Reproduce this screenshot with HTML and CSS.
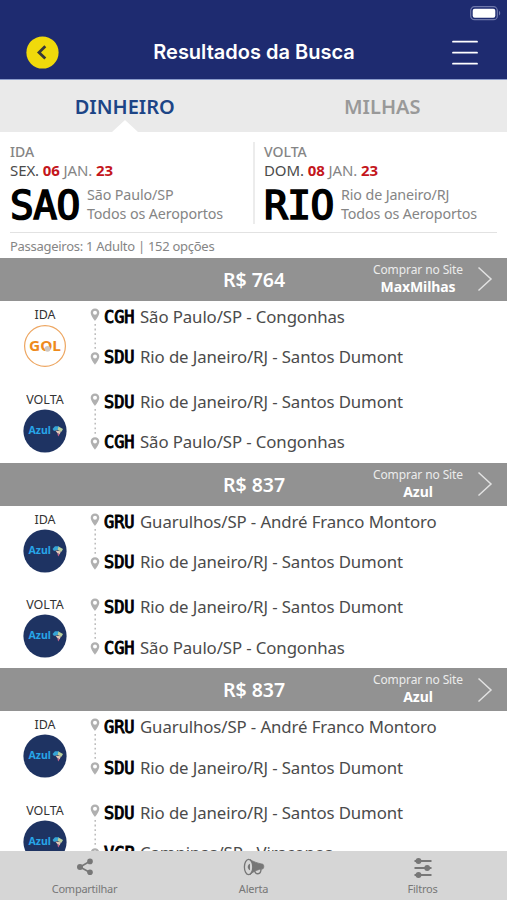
FILE: index.html
```html
<!DOCTYPE html>
<html lang="pt-BR">
<head>
    <meta charset="UTF-8">
    <meta name="viewport" content="width=device-width, initial-scale=1.0">
    <title>Resultados da Busca</title>
    <link rel="stylesheet" href="styles.css">
</head>
<body>
    <!-- shared icons -->
    <svg class="sprite" width="0" height="0">
        <symbol id="route" viewBox="0 0 10 58">
            <path id="pin" fill="#b0b0b0" fill-rule="evenodd" d="M5 0.5C2.4 0.5 0.7 2.4 0.7 4.8C0.7 7.8 5 13 5 13S9.3 7.8 9.3 4.8C9.3 2.4 7.6 0.5 5 0.5ZM5 2.8A2 2 0 1 1 5 6.8A2 2 0 1 1 5 2.8Z"/>
            <use href="#pin" y="43.7"/>
            <path d="M5.2 16V42" stroke="#b5b5b5" stroke-width="1.4" stroke-dasharray="1.8 2.8"/>
        </symbol>
        <symbol id="gol" viewBox="0 0 44 44">
            <circle cx="22" cy="22" r="20.4" fill="#fff" stroke="#eda661" stroke-width="1.2"/>
            <text class="gol-text" x="6" y="27.3" textLength="32" lengthAdjust="spacingAndGlyphs">GOL</text>
            <circle cx="24.5" cy="24.8" r="2.9" fill="#cfc8c2"/>
        </symbol>
        <symbol id="azul" viewBox="0 0 44 44">
            <circle cx="22" cy="22" r="21.6" fill="#1e3362"/>
            <text class="azul-text" x="5.5" y="25.3" textLength="22.5" lengthAdjust="spacingAndGlyphs">Azul</text>
            <path fill="#35a5d6" d="M29.5 20L32 17.3L36 17.3L35.5 20.5L31 22Z"/>
            <path fill="#b9cf9c" d="M35.5 17.6L40 20L38.5 22.8L34.5 21Z"/>
            <path fill="#e3c9b5" d="M32.3 21.5L38 22.3L36.7 25.2L34.5 24.2Z"/>
            <path fill="#c0618a" d="M34.3 24.2L36.7 25.2L35.2 27.4Z"/>
        </symbol>
        <symbol id="next" viewBox="0 0 16 26">
            <path d="M1.5 1.5L14 13L1.5 24.5" fill="none" stroke="#e2e2e2" stroke-width="1.5"/>
        </symbol>
    </svg>

    <div class="app">
        <header class="header">
            <svg class="battery" width="31" height="15" viewBox="0 0 31 15">
                <rect x="0.7" y="0.7" width="26.6" height="13" rx="3.8" fill="none" stroke="#6f78ab" stroke-width="1.2"/>
                <rect x="2.7" y="2.7" width="22.6" height="9" rx="2" fill="#fff"/>
                <path d="M29 5C30.6 5.6 30.6 8.8 29 9.4Z" fill="#6f78ab"/>
            </svg>
            <div class="nav">
                <svg class="back" width="33" height="33" viewBox="0 0 33 33">
                    <circle cx="16.5" cy="16.5" r="16.1" fill="#f0da0b"/>
                    <path d="M19.3 10.3L13 16.4L19.3 22.5" fill="none" stroke="#37383a" stroke-width="2.8"/>
                </svg>
                <h1 class="title">Resultados da Busca</h1>
                <svg class="menu" width="26" height="26" viewBox="0 0 26 26">
                    <path d="M1 1.7H25M1 12.7H25M1 23.7H25" stroke="#fff" stroke-width="1.8" stroke-linecap="round"/>
                </svg>
            </div>
        </header>

        <div class="tabs">
            <div class="tab active">DINHEIRO</div>
            <div class="tab">MILHAS</div>
        </div>

        <section class="summary">
            <div class="trips">
                <div class="trip">
                    <div class="way">IDA</div>
                    <div class="date"><span class="day">SEX.</span> <b>06</b> JAN. <b>23</b></div>
                    <div class="place">
                        <div class="iata">SAO</div>
                        <div class="city">São Paulo/SP<br>Todos os Aeroportos</div>
                    </div>
                </div>
                <div class="trip">
                    <div class="way">VOLTA</div>
                    <div class="date"><span class="day">DOM.</span> <b>08</b> JAN. <b>23</b></div>
                    <div class="place">
                        <div class="iata">RIO</div>
                        <div class="city">Rio de Janeiro/RJ<br>Todos os Aeroportos</div>
                    </div>
                </div>
            </div>
            <div class="passengers">Passageiros: 1 Adulto | 152 opções</div>
        </section>

        <main class="results">
            <article class="result">
                <div class="bar">
                    <div class="price">R$ 764</div>
                    <div class="buy"><span>Comprar no Site</span><b>MaxMilhas</b></div>
                    <svg class="next" width="16" height="26"><use href="#next"/></svg>
                </div>
                <div class="leg">
                    <div class="airline"><span>IDA</span><svg width="44" height="44"><use href="#gol"/></svg></div>
                    <svg class="route" width="10" height="58"><use href="#route"/></svg>
                    <div class="stops">
                        <p><b>CGH</b><span>São Paulo/SP - Congonhas</span></p>
                        <p><b>SDU</b><span>Rio de Janeiro/RJ - Santos Dumont</span></p>
                    </div>
                </div>
                <div class="leg">
                    <div class="airline"><span>VOLTA</span><svg width="44" height="44"><use href="#azul"/></svg></div>
                    <svg class="route" width="10" height="58"><use href="#route"/></svg>
                    <div class="stops">
                        <p><b>SDU</b><span>Rio de Janeiro/RJ - Santos Dumont</span></p>
                        <p><b>CGH</b><span>São Paulo/SP - Congonhas</span></p>
                    </div>
                </div>
            </article>

            <article class="result">
                <div class="bar">
                    <div class="price">R$ 837</div>
                    <div class="buy"><span>Comprar no Site</span><b>Azul</b></div>
                    <svg class="next" width="16" height="26"><use href="#next"/></svg>
                </div>
                <div class="leg">
                    <div class="airline"><span>IDA</span><svg width="44" height="44"><use href="#azul"/></svg></div>
                    <svg class="route" width="10" height="58"><use href="#route"/></svg>
                    <div class="stops">
                        <p><b>GRU</b><span>Guarulhos/SP - André Franco Montoro</span></p>
                        <p><b>SDU</b><span>Rio de Janeiro/RJ - Santos Dumont</span></p>
                    </div>
                </div>
                <div class="leg">
                    <div class="airline"><span>VOLTA</span><svg width="44" height="44"><use href="#azul"/></svg></div>
                    <svg class="route" width="10" height="58"><use href="#route"/></svg>
                    <div class="stops">
                        <p><b>SDU</b><span>Rio de Janeiro/RJ - Santos Dumont</span></p>
                        <p><b>CGH</b><span>São Paulo/SP - Congonhas</span></p>
                    </div>
                </div>
            </article>

            <article class="result">
                <div class="bar">
                    <div class="price">R$ 837</div>
                    <div class="buy"><span>Comprar no Site</span><b>Azul</b></div>
                    <svg class="next" width="16" height="26"><use href="#next"/></svg>
                </div>
                <div class="leg">
                    <div class="airline"><span>IDA</span><svg width="44" height="44"><use href="#azul"/></svg></div>
                    <svg class="route" width="10" height="58"><use href="#route"/></svg>
                    <div class="stops">
                        <p><b>GRU</b><span>Guarulhos/SP - André Franco Montoro</span></p>
                        <p><b>SDU</b><span>Rio de Janeiro/RJ - Santos Dumont</span></p>
                    </div>
                </div>
                <div class="leg">
                    <div class="airline"><span>VOLTA</span><svg width="44" height="44"><use href="#azul"/></svg></div>
                    <svg class="route" width="10" height="58"><use href="#route"/></svg>
                    <div class="stops">
                        <p><b>SDU</b><span>Rio de Janeiro/RJ - Santos Dumont</span></p>
                        <p><b>VCP</b><span>Campinas/SP - Viracopos</span></p>
                    </div>
                </div>
            </article>
        </main>

        <footer class="toolbar">
            <div class="tool">
                <svg width="18" height="18" viewBox="0 0 18 18" fill="#777">
                    <path d="M14 3.2L4 9L14 14.5" fill="none" stroke="#777" stroke-width="1.6"/>
                    <circle cx="14" cy="3.4" r="2.8"/>
                    <circle cx="4" cy="9" r="3"/>
                    <circle cx="14" cy="14.3" r="2.8"/>
                </svg>
                <span>Compartilhar</span>
            </div>
            <div class="tool">
                <svg width="22" height="18" viewBox="0 0 22 18">
                    <path d="M11.5 12C12 17.3 18 17 18 11" fill="none" stroke="#777" stroke-width="1.4"/>
                    <path d="M7 1.5C10.5 3.8 14 5 20 6.3C21 7.5 21 9.5 20 10.8C15 11.2 11 13 7 16.5Z" fill="#777" stroke="#777" stroke-width="0.8"/>
                    <ellipse cx="5.6" cy="9" rx="4.2" ry="7.6" fill="#d6d6d6" stroke="#777" stroke-width="1.3"/>
                    <path d="M7 5.8C4 6.8 4 11.2 7 12.2Z" fill="#777"/>
                </svg>
                <span>Alerta</span>
            </div>
            <div class="tool">
                <svg width="18" height="20" viewBox="0 0 18 20">
                    <path d="M0.5 3H17.5M0.5 10H17.5M0.5 17H17.5" stroke="#777" stroke-width="1.8"/>
                    <circle cx="4.5" cy="3" r="2.9" fill="#777"/>
                    <circle cx="13.2" cy="10" r="2.9" fill="#777"/>
                    <circle cx="4.5" cy="17" r="2.9" fill="#777"/>
                </svg>
                <span>Filtros</span>
            </div>
        </footer>
    </div>
</body>
</html>
```

FILE: styles.css
```css
* {
    box-sizing: border-box;
}
body {
    margin: 0;
    font-family: "Noto Sans", sans-serif;
    background-color: #fff;
    color: #4b4b4b;
}
svg {
    display: block;
    flex: none;
}
.sprite {
    display: none;
}
.app {
    height: 900px;
    display: flex;
    flex-direction: column;
    overflow: hidden;
}

/* header */
.header {
    height: 80px;
    flex: none;
    padding-top: 6px;
    background-color: #1e2b70;
    border-bottom: 1px solid #8c9ccb;
}
.battery {
    margin-left: auto;
    margin-right: 6px;
}
.nav {
    display: flex;
    align-items: center;
    justify-content: space-between;
    height: 33px;
    margin-top: 15px;
    padding: 0 29px 0 26px;
}
.title {
    margin: 0 3px 1px 0;
    font-family: Inter, sans-serif;
    font-size: 20px;
    font-weight: 600;
    color: #fff;
}

/* tabs */
.tabs {
    display: flex;
    height: 52px;
    flex: none;
    background-color: #eaeaea;
}
.tab {
    position: relative;
    width: 50%;
    padding-left: 4px;
    text-align: center;
    font-size: 20px;
    font-weight: 600;
    line-height: 54px;
    color: #999;
}
.tab.active {
    padding: 0 4px 0 0;
    color: #1d4586;
}
.tab.active::after {
    content: "";
    position: absolute;
    left: 112px;
    bottom: 0;
    border: 13px solid transparent;
    border-top: 0;
    border-bottom: 12px solid #fff;
}

/* search summary */
.summary {
    height: 125.6px;
    flex: none;
    padding: 10px 10px 0;
}
.trips {
    display: flex;
    height: 91px;
    border-bottom: 1px solid #e2e2e2;
}
.trip {
    width: 243px;
    height: 82px;
    color: #858585;
}
.trip + .trip {
    padding-left: 9px;
    border-left: 2px solid #ececec;
}
.way {
    font-size: 14px;
    font-weight: 500;
    line-height: 19px;
}
.date {
    font-size: 15px;
    line-height: 19px;
    letter-spacing: -0.1px;
}
.day {
    color: #4b4b4b;
}
.date b {
    color: #c4161c;
}
.place {
    display: flex;
    align-items: center;
    gap: 7px;
    height: 49px;
}
.iata {
    width: 70px;
    padding-top: 1px;
    font-family: "DejaVu Sans Mono", monospace;
    font-size: 39.5px;
    letter-spacing: -0.5px;
    line-height: 48px;
    color: #000;
    -webkit-text-stroke: 1.7px #000;
}
.city {
    font-size: 14.3px;
    line-height: 18.6px;
    letter-spacing: -0.12px;
    white-space: nowrap;
}
.passengers {
    font-size: 13px;
    line-height: 26px;
    letter-spacing: -0.28px;
    color: #858585;
}

/* results */
.results {
    flex: 1;
    min-height: 0;
    overflow: hidden;
}
.result {
    height: 205.2px;
}
.bar {
    display: grid;
    grid-template-columns: 164px 180px 148px 15px;
    align-items: center;
    height: 43.3px;
    background-color: #929292;
    color: #fff;
}
.price {
    grid-column: 2;
    text-align: center;
    font-size: 19.5px;
    font-weight: 600;
    white-space: nowrap;
}
.buy {
    display: flex;
    flex-direction: column;
    align-items: center;
    padding-bottom: 3px;
    font-size: 12px;
    line-height: 17px;
    letter-spacing: -0.1px;
    color: #ececec;
}
.buy b {
    font-size: 14px;
    color: #fff;
}
.next {
    margin-left: -15px;
}
.leg {
    display: flex;
    height: 85.3px;
}
.leg + .leg {
    height: 76.6px;
}
.airline {
    width: 90px;
    padding-top: 4px;
    display: flex;
    flex-direction: column;
    align-items: center;
    font-size: 12.5px;
    line-height: 19px;
    color: #333;
}
.route {
    margin-top: 7px;
}
.stops {
    padding: 5px 0 0 4px;
}
.stops p {
    display: flex;
    gap: 6px;
    margin: 0 0 18.3px;
    line-height: 22px;
    font-size: 16.8px;
    letter-spacing: -0.1px;
    white-space: nowrap;
}
.stops b {
    width: 30px;
    font-family: "DejaVu Sans Mono", monospace;
    font-size: 17px;
    font-weight: normal;
    letter-spacing: -0.1px;
    color: #000;
    -webkit-text-stroke: 0.9px #000;
}
.gol-text {
    font: bold 15px "Noto Sans", sans-serif;
    fill: #ee8a1d;
}
.azul-text {
    font: bold 10px "Noto Sans", sans-serif;
    fill: #27a5e8;
}

/* bottom toolbar */
.toolbar {
    display: flex;
    height: 49px;
    flex: none;
    background-color: #d6d6d6;
    color: #777;
    font-size: 11px;
    letter-spacing: -0.25px;
    line-height: 16px;
}
.tool {
    flex: 1;
    display: flex;
    flex-direction: column;
    align-items: center;
    justify-content: space-between;
    padding: 7px 0 3px;
}
```
